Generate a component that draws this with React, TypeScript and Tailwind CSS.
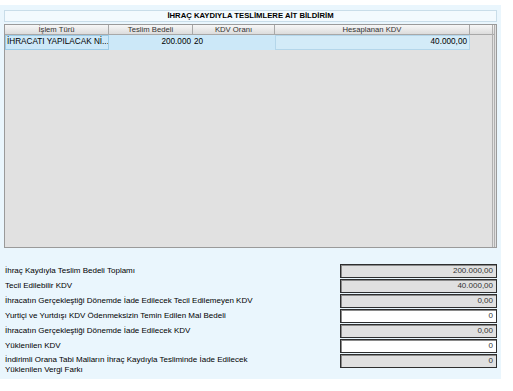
import React from "react";

const rows: { label: string[]; value: string; editable?: boolean }[] = [
  { label: ["İhraç Kaydıyla Teslim Bedeli Toplamı"], value: "200.000,00" },
  { label: ["Tecil Edilebilir KDV"], value: "40.000,00" },
  { label: ["İhracatın Gerçekleştiği Dönemde İade Edilecek Tecil Edilemeyen KDV"], value: "0,00" },
  { label: ["Yurtiçi ve Yurtdışı KDV Ödenmeksizin Temin Edilen Mal Bedeli"], value: "0", editable: true },
  { label: ["İhracatın Gerçekleştiği Dönemde İade Edilecek KDV"], value: "0,00" },
  { label: ["Yüklenilen KDV"], value: "0", editable: true },
  {
    label: ["İndirimli Orana Tabi Malların İhraç Kaydıyla Tesliminde İade Edilecek", "Yüklenilen Vergi Farkı"],
    value: "0",
  },
];

export default function App() {
  return (
    <div
      className="w-[513px] h-[391px] bg-white pt-[5px] text-black"
      style={{ fontFamily: '"Liberation Sans", Arial, sans-serif' }}
    >
      <div className="w-[501px] h-[374px] bg-[#eaf6fd] px-[4px] pt-[5px] flex flex-col">
        <div className="h-[12px] border border-[#c9dde9] bg-[#f3fafe] flex items-center justify-center text-[7.7px] font-bold leading-none">
          İHRAÇ KAYDIYLA TESLİMLERE AİT BİLDİRİM
        </div>
        <div className="mt-[2px] h-[224px] border border-[#9a9a9a] bg-[#e1e1e1] flex flex-col relative">
          <div className="flex h-[10px] text-[7.7px] leading-none text-[#333]">
            <div className="w-[104px] border-r border-b border-[#a8a8a8] bg-gradient-to-b from-[#f7f7f7] to-[#dcdcdc] flex items-center justify-center">İşlem Türü</div>
            <div className="w-[84px] border-r border-b border-[#a8a8a8] bg-gradient-to-b from-[#f7f7f7] to-[#dcdcdc] flex items-center justify-center">Teslim Bedeli</div>
            <div className="w-[82px] border-r border-b border-[#a8a8a8] bg-gradient-to-b from-[#f7f7f7] to-[#dcdcdc] flex items-center justify-center">KDV Oranı</div>
            <div className="w-[195px] border-r border-b border-[#a8a8a8] bg-gradient-to-b from-[#f7f7f7] to-[#dcdcdc] flex items-center justify-center">Hesaplanan KDV</div>
            <div className="w-[24px] border-b border-[#a8a8a8] bg-gradient-to-b from-[#f7f7f7] to-[#dcdcdc]"></div>
          </div>
          <div className="flex h-[15px] text-[8.2px] leading-none">
            <div className="w-[104px] bg-[#cce8f8] border border-[#9ccbe6] flex items-center px-[1px] whitespace-nowrap overflow-hidden">İHRACATI YAPILACAK Nİ...</div>
            <div className="w-[84px] bg-[#cce8f8] flex items-center justify-end pr-[2px]">200.000</div>
            <div className="w-[82px] bg-[#cce8f8] flex items-center pl-[1px]">20</div>
            <div className="w-[195px] bg-[#d3ebf8] border border-[#b4d6ea] flex items-center justify-end pr-[2px]">40.000,00</div>
          </div>
          <div className="absolute right-[1px] top-0 bottom-0 w-[3px] border-l border-r border-[#b0b0b0]"></div>
        </div>
        <div className="mt-[16px] flex flex-col gap-[1px] text-[8px] leading-[10px]">
          {rows.map((r, i) => (
            <div key={i} className="flex h-[14px]">
              <div className={`flex-1 pl-[1px] flex flex-col ${r.label.length > 1 ? "justify-start pt-[1px]" : "justify-center"}`}>
                {r.label.map((l, j) => (
                  <div key={j} className="whitespace-nowrap">{l}</div>
                ))}
              </div>
              <div
                className={`w-[157px] h-[14px] border border-[#2e2e2e] shadow-[inset_1px_1px_0_#8a8a8a] flex items-center justify-end pr-[3px] text-[#333] ${
                  r.editable ? "bg-white" : "bg-[#e0e0e0]"
                }`}
              >
                {r.value}
              </div>
            </div>
          ))}
        </div>
      </div>
    </div>
  );
}
